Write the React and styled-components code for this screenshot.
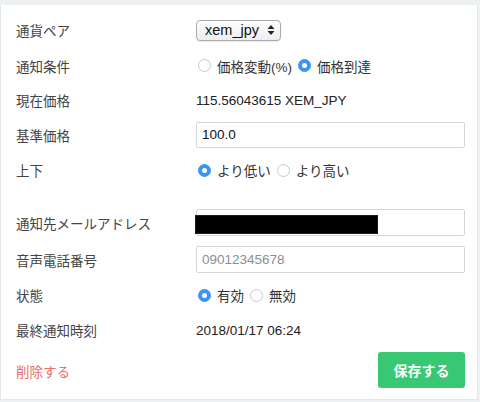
import React from "react";
import styled, { createGlobalStyle } from "styled-components";

const Global = createGlobalStyle`
  html, body { margin: 0; padding: 0; background: #eef1f2; }
  body { font-family: "Liberation Sans", "Noto Sans CJK JP", sans-serif; }
  * { box-sizing: border-box; }
`;

const Card = styled.div`
  margin: 5px 2px 2px 0;
  height: 395px;
  background: #fff;
  border: 1px solid #e4e7e9;
  border-top: none;
  padding-top: 7px;
`;

const Row = styled.div`
  display: flex;
  align-items: center;
  height: ${(p) => p.$h}px;
  padding: 0 12px 0 15px;
`;

const Label = styled.div`
  width: 180px;
  flex: none;
  font-size: 13.5px;
  color: #444;
`;

const Value = styled.div`
  font-size: 13.5px;
  color: #222;
`;

const Field = styled.div`
  position: relative;
  flex: 1;
`;

const Input = styled.input`
  width: 100%;
  height: ${(p) => p.$h || 26}px;
  border: 1px solid #d6d6d6;
  border-radius: 2px;
  padding: 0 5px;
  font: inherit;
  font-size: 13.5px;
  color: #111;
  outline: none;
  &::placeholder { color: #8e8e8e; }
`;

const Redact = styled.div`
  position: absolute;
  left: -1px;
  top: 6px;
  width: 183px;
  height: 19px;
  background: #000;
  border: 1px solid #1f1446;
`;

const SelectBox = styled.div`
  display: flex;
  align-items: center;
  justify-content: space-between;
  width: 85px;
  height: 21px;
  border: 1px solid #a9a9a9;
  border-radius: 4px;
  background: linear-gradient(#fdfdfd, #eeeeee);
  padding: 0 5px 0 8px;
  font-size: 14.5px;
  color: #111;
  box-shadow: 0 1px 1px rgba(0,0,0,0.08);
`;

const Radios = styled.div`
  display: flex;
  align-items: center;
  font-size: 13.5px;
  color: #333;
`;

const RadioItem = styled.label`
  display: flex;
  align-items: center;
  margin-right: 4px;
`;

const Dot = styled.span`
  width: 13px;
  height: 13px;
  border-radius: 50%;
  margin: 0 6px 0 2px;
  flex: none;
  background: ${(p) => (p.$on ? "#3b95f5" : "#fff")};
  border: 1px solid ${(p) => (p.$on ? "#3b95f5" : "#c9c9c9")};
  display: flex;
  align-items: center;
  justify-content: center;
  &::after {
    content: "";
    width: 5px;
    height: 5px;
    border-radius: 50%;
    background: #fff;
    display: ${(p) => (p.$on ? "block" : "none")};
  }
`;

const Spacer = styled.div`
  height: 16px;
`;

const Footer = styled.div`
  display: flex;
  align-items: center;
  justify-content: space-between;
  padding: 2px 12px 0 15px;
  height: 42px;
`;

const Delete = styled.a`
  font-size: 13.5px;
  color: #ec6a66;
  margin-top: 2px;
`;

const SaveButton = styled.button`
  width: 87px;
  height: 36px;
  border: none;
  border-radius: 3px;
  background: #38c772;
  color: #fff;
  font: inherit;
  font-size: 14px;
  font-weight: bold;
`;

const Radio = ({ on, children }) => (
  <RadioItem>
    <Dot $on={on} />
    {children}
  </RadioItem>
);

export default function App() {
  return (
    <>
      <Global />
      <Card>
        <Row $h={36}>
          <Label>通貨ペア</Label>
          <SelectBox>
            <span>xem_jpy</span>
            <svg width="8" height="12" viewBox="0 0 8 12">
              <path d="M4 1 L7.5 5 H0.5 Z" fill="#222" />
              <path d="M4 11 L7.5 7 H0.5 Z" fill="#222" />
            </svg>
          </SelectBox>
        </Row>
        <Row $h={35}>
          <Label>通知条件</Label>
          <Radios>
            <Radio>価格変動(%)</Radio>
            <Radio on>価格到達</Radio>
          </Radios>
        </Row>
        <Row $h={34}>
          <Label>現在価格</Label>
          <Value>115.56043615 XEM_JPY</Value>
        </Row>
        <Row $h={35}>
          <Label>基準価格</Label>
          <Field>
            <Input defaultValue="100.0" />
          </Field>
        </Row>
        <Row $h={36}>
          <Label>上下</Label>
          <Radios>
            <Radio on>より低い</Radio>
            <Radio>より高い</Radio>
          </Radios>
        </Row>
        <Spacer />
        <Row $h={37}>
          <Label>通知先メールアドレス</Label>
          <Field>
            <Input $h={27} />
            <Redact />
          </Field>
        </Row>
        <Row $h={37}>
          <Label>音声電話番号</Label>
          <Field>
            <Input $h={27} placeholder="09012345678" />
          </Field>
        </Row>
        <Row $h={34}>
          <Label>状態</Label>
          <Radios>
            <Radio on>有効</Radio>
            <Radio>無効</Radio>
          </Radios>
        </Row>
        <Row $h={36}>
          <Label>最終通知時刻</Label>
          <Value>2018/01/17 06:24</Value>
        </Row>
        <Footer>
          <Delete>削除する</Delete>
          <SaveButton>保存する</SaveButton>
        </Footer>
      </Card>
    </>
  );
}
